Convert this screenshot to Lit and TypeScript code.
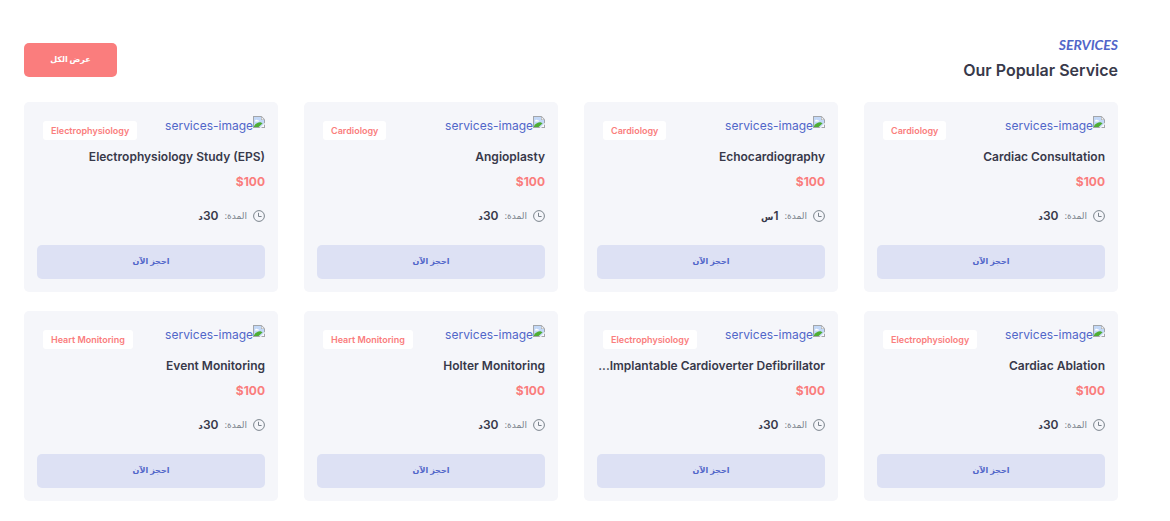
import { LitElement, html, css } from "lit";
import { customElement, property } from "lit/decorators.js";

interface Service {
  name: string;
  category: string;
  amount: number;
  unit: string;
}

const SERVICES: Service[] = [
  { name: "Cardiac Consultation", category: "Cardiology", amount: 30, unit: "د" },
  { name: "Echocardiography", category: "Cardiology", amount: 1, unit: "س" },
  { name: "Angioplasty", category: "Cardiology", amount: 30, unit: "د" },
  { name: "Electrophysiology Study (EPS)", category: "Electrophysiology", amount: 30, unit: "د" },
  { name: "Cardiac Ablation", category: "Electrophysiology", amount: 30, unit: "د" },
  { name: "Implantable Cardioverter Defibrillator...", category: "Electrophysiology", amount: 30, unit: "د" },
  { name: "Holter Monitoring", category: "Heart Monitoring", amount: 30, unit: "د" },
  { name: "Event Monitoring", category: "Heart Monitoring", amount: 30, unit: "د" },
];

@customElement("service-card")
export class ServiceCard extends LitElement {
  @property({ attribute: false }) service!: Service;

  static styles = css`
    :host {
      display: block;
      min-width: 0;
      background: #f5f6fa;
      border-radius: 5px;
      padding: 13px;
      box-sizing: border-box;
    }
    .top {
      display: flex;
      justify-content: space-between;
      align-items: flex-start;
      height: 29px;
    }
    .image {
      display: flex;
      align-items: flex-start;
      color: #5166c9;
      font-size: 12px;
      line-height: 22px;
      text-decoration: none;
    }
    .image svg {
      margin-top: 1px;
    }
    .tag {
      margin: 6px 0 0 6px;
      padding: 0 8px;
      height: 19px;
      border-radius: 3px;
      background: #fff;
      color: #fa7d7d;
      font-size: 9px;
      font-weight: 600;
      line-height: 19px;
    }
    .name {
      margin: 0;
      color: #38394a;
      font-size: 12px;
      font-weight: 600;
      line-height: 25px;
      white-space: nowrap;
    }
    .price {
      margin: 0;
      color: #fa7d7d;
      font-size: 12px;
      font-weight: 700;
      line-height: 25px;
    }
    .duration {
      display: flex;
      align-items: center;
      gap: 6px;
      margin: 10px 0 18px;
      height: 23px;
      color: #7a838c;
      font-size: 12px;
    }
    .label {
      font-size: 9px;
    }
    .amount {
      color: #38394a;
      font-weight: 600;
    }
    .unit {
      font-size: 9px;
    }
    .book {
      display: block;
      width: 100%;
      height: 34px;
      padding: 0 0 2px;
      border: 0;
      border-radius: 5px;
      background: #dde1f4;
      color: #5166c9;
      font: inherit;
      font-size: 8px;
      font-weight: 600;
      cursor: pointer;
    }
  `;

  render() {
    const s = this.service;
    return html`
      <div class="top">
        <a class="image" href="#">
          <svg width="12" height="12" viewBox="0 0 12 12" aria-hidden="true">
            <path d="M0 0H8.5L12 3.5V12H0Z" fill="#a3a6aa" />
            <path d="M1 1H8V4H11V11H1Z" fill="#c3d8f7" />
            <path d="M8.6 1.2V3.4H10.9Z" fill="#fff" />
            <path d="M2 5a1.5 1.5 0 0 1 2.6-.8A1.2 1.2 0 0 1 6 5.4H2Z" fill="#fff" />
            <path d="M1 11V10C3 7.4 5.4 6 8 6.4L9.6 7.2 5.6 11Z" fill="#4fae33" />
            <path d="M6.4 12L12 6.8V8.2L8 12Z" fill="#f5f6fa" />
            <path d="M8.9 11H11V8.9Z" fill="#fff" />
          </svg>
          <span>services-image</span>
        </a>
        <span class="tag">${s.category}</span>
      </div>
      <h4 class="name">${s.name}</h4>
      <p class="price"><bdi dir="ltr">$100</bdi></p>
      <div class="duration">
        <svg width="12" height="12" viewBox="0 0 12 12" fill="none" stroke="#7a838c" aria-hidden="true">
          <circle cx="6" cy="6" r="5.4" />
          <path d="M5.5 2.8V6.5H8.6" />
        </svg>
        <span class="label">المدة:</span>
        <span class="amount">${s.amount}<span class="unit">${s.unit}</span></span>
      </div>
      <button class="book" type="button">احجز الآن</button>
    `;
  }
}

@customElement("app-root")
export class AppRoot extends LitElement {
  static styles = css`
    :host {
      display: block;
      direction: rtl;
      background: #fff;
      padding: 35px 52px 19px 24px;
      font-family: Inter, "DejaVu Sans", sans-serif;
    }
    .head {
      display: flex;
      justify-content: space-between;
      align-items: center;
      margin-bottom: 17px;
    }
    .eyebrow {
      margin: 0;
      color: #5166c9;
      font-family: Lato, sans-serif;
      font-size: 14px;
      font-style: italic;
      font-weight: 700;
      line-height: 20px;
    }
    .title {
      margin: 0;
      color: #38394a;
      font-size: 16px;
      font-weight: 600;
      line-height: 30px;
    }
    .all {
      height: 34px;
      min-width: 93px;
      padding: 0 16px 2px;
      border: 0;
      border-radius: 5px;
      background: #fa7d7d;
      color: #fff;
      font: inherit;
      font-size: 8px;
      font-weight: 700;
      cursor: pointer;
    }
    .grid {
      display: grid;
      grid-template-columns: repeat(4, minmax(0, 1fr));
      gap: 19px 26px;
    }
  `;

  render() {
    return html`
      <header class="head">
        <div>
          <p class="eyebrow">SERVICES</p>
          <h2 class="title">Our Popular Service</h2>
        </div>
        <button class="all" type="button">عرض الكل</button>
      </header>
      <main class="grid">
        ${SERVICES.map((s) => html`<service-card .service=${s}></service-card>`)}
      </main>
    `;
  }
}
